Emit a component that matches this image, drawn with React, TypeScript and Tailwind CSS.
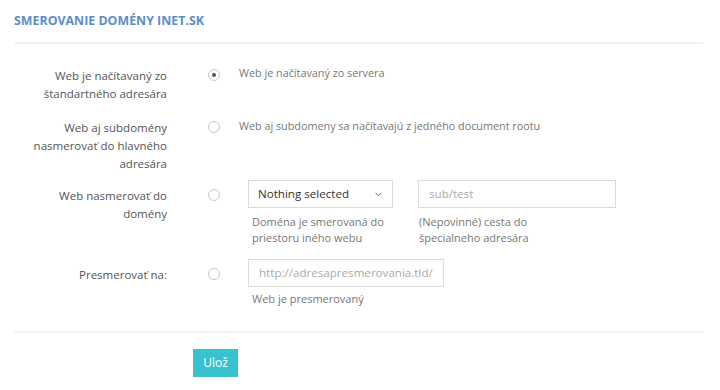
import React from "react";

function Radio({ checked }: { checked?: boolean }) {
  return (
    <div className="w-[12px] h-[12px] rounded-full border border-[#c8c8c8] bg-white flex items-center justify-center shrink-0">
      {checked && <div className="w-[4px] h-[4px] rounded-full bg-[#555]" />}
    </div>
  );
}

function Label({ children }: { children: React.ReactNode }) {
  return (
    <div className="w-[153px] pl-[13px] pt-[7px] text-right text-[11.5px] leading-[18px] text-[#555] shrink-0">
      {children}
    </div>
  );
}

export default function App() {
  return (
    <div className="w-[720px] h-[390px] bg-white px-[14px] font-['Open_Sans',sans-serif] overflow-hidden">
      <div className="pt-[13px] text-[12.4px] leading-[16px] font-bold text-[#5b8ec8] uppercase">
        Smerovanie domény inet.sk
      </div>
      <div className="mt-[13px] h-[2px] w-[689px] bg-[#f3f3f3]" />

      {/* Row 1 */}
      <div className="flex mt-[16px]">
        <Label>Web je načítavaný zo štandartného adresára</Label>
        <div className="ml-[41px] mt-[9px]">
          <Radio checked />
        </div>
        <div className="ml-[19px] pt-[4px] text-[10.8px] leading-[18px] text-[#777]">
          Web je načítavaný zo servera
        </div>
      </div>

      {/* Row 2 */}
      <div className="flex mt-[9px]">
        <Label>Web aj subdomény nasmerovať do hlavného adresára</Label>
        <div className="ml-[41px] mt-[9px]">
          <Radio />
        </div>
        <div className="ml-[19px] pt-[5px] text-[10.8px] leading-[18px] text-[#777]">
          Web aj subdomeny sa načítavajú z jedného document rootu
        </div>
      </div>

      {/* Row 3 */}
      <div className="flex mt-[7px]">
        <Label>Web nasmerovať do domény</Label>
        <div className="ml-[41px] mt-[9px]">
          <Radio />
        </div>
        <div className="ml-[28px] flex gap-[25px]">
          <div className="w-[145px]">
            <div className="h-[28px] border border-[#dcdcdc] flex items-center justify-between pl-[9px] pr-[10px] text-[11.6px] text-[#333]">
              <span>Nothing selected</span>
              <svg width="7" height="5" viewBox="0 0 7 5" fill="none">
                <polyline points="0.5,0.8 3.5,3.8 6.5,0.8" stroke="#666" strokeWidth="1" />
              </svg>
            </div>
            <div className="mt-[6px] pl-[4px] text-[11px] leading-[16px] text-[#777]">
              Doména je smerovaná do priestoru iného webu
            </div>
          </div>
          <div className="w-[198px]">
            <div className="h-[28px] border border-[#dcdcdc] flex items-center pl-[10px] text-[11.6px] text-[#aaa]">
              sub/test
            </div>
            <div className="mt-[6px] pl-[1px] w-[145px] text-[11px] leading-[16px] text-[#777]">
              (Nepovinné) cesta do špecialneho adresára
            </div>
          </div>
        </div>
      </div>

      {/* Row 4 */}
      <div className="flex mt-[13px]">
        <Label>Presmerovať na:</Label>
        <div className="ml-[41px] mt-[9px]">
          <Radio />
        </div>
        <div className="ml-[28px]">
          <div className="w-[196px] h-[28px] border border-[#dcdcdc] flex items-center pl-[10px] text-[11.6px] text-[#aaa]">
            http://adresapresmerovania.tld/
          </div>
          <div className="mt-[4px] pl-[4px] text-[11px] leading-[16px] text-[#777]">
            Web je presmerovaný
          </div>
        </div>
      </div>

      <div className="mt-[24px] h-[2px] w-[689px] bg-[#f3f3f3]" />

      <div className="mt-[16px] ml-[179px]">
        <button className="w-[45px] h-[28px] bg-[#37c2cd] text-white text-[12px] flex items-center justify-center">
          Ulož
        </button>
      </div>
    </div>
  );
}
